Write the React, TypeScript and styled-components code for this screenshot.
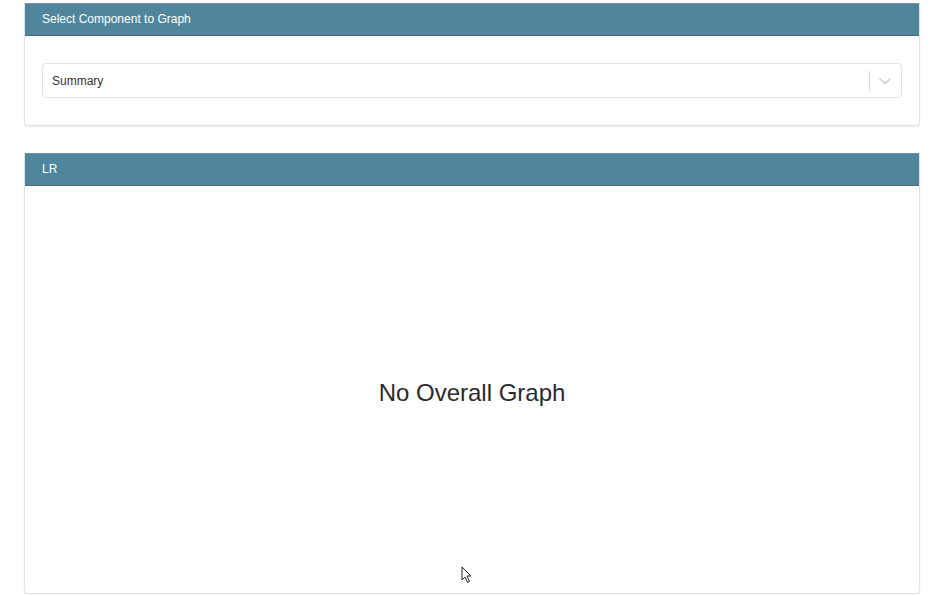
import React, { FC } from 'react';
import styled, { createGlobalStyle } from 'styled-components';

const GlobalStyle = createGlobalStyle`
    html, body {
        margin: 0;
        padding: 0;
        background: #ffffff;
        font-family: 'Liberation Sans', Arial, Helvetica, sans-serif;
        color: #333333;
    }
`;

const App: FC = () => {
    return (
        <Page>
            <GlobalStyle />
            <Card>
                <CardHeader>Select Component to Graph</CardHeader>
                <SelectBody>
                    <Select>
                        <SelectValue>Summary</SelectValue>
                        <Indicators>
                            <Separator />
                            <Chevron width="20" height="20" viewBox="0 0 20 20">
                                <path
                                    d="M5 8 L10 12.5 L15 8"
                                    fill="none"
                                    stroke="#cccccc"
                                    strokeWidth="1.6"
                                    strokeLinecap="round"
                                    strokeLinejoin="round"
                                />
                            </Chevron>
                        </Indicators>
                    </Select>
                </SelectBody>
            </Card>
            <Card>
                <CardHeader>LR</CardHeader>
                <GraphBody>
                    <EmptyText>No Overall Graph</EmptyText>
                    <Cursor width="12" height="18" viewBox="0 0 12 18">
                        <path
                            d="M1 1 L1 14 L4 11 L6.5 16.5 L8.5 15.5 L6 10 L10 10 Z"
                            fill="#ffffff"
                            stroke="#222222"
                            strokeWidth="1"
                            strokeLinejoin="round"
                        />
                    </Cursor>
                </GraphBody>
            </Card>
        </Page>
    );
};

const Page = styled.div`
    display: flex;
    flex-direction: column;
    gap: 27px;
    width: 896px;
    padding: 3px 0 0 24px;
`;

const Card = styled.section`
    display: flex;
    flex-direction: column;
    background: #ffffff;
    border: 1px solid #dfe3e8;
    border-top: none;
    border-radius: 0 0 4px 4px;
    box-shadow: 0 1px 2px rgba(0, 0, 0, 0.08);
    overflow: hidden;
`;

const CardHeader = styled.div`
    height: 31px;
    line-height: 31px;
    padding: 0 18px;
    margin: 0 -1px;
    background: #4f869d;
    border-top: 1px solid #8a8a8a;
    border-bottom: 1px solid #3f6f82;
    color: #ffffff;
    font-size: 12px;
`;

const SelectBody = styled.div`
    padding: 27px 17px 27px;
`;

const Select = styled.div`
    display: flex;
    align-items: center;
    height: 33px;
    border: 1px solid #e3e3e3;
    border-radius: 4px;
    padding-left: 9px;
`;

const SelectValue = styled.span`
    flex: 1;
    font-size: 12px;
    color: #333333;
`;

const Indicators = styled.div`
    display: flex;
    align-items: center;
    height: 100%;
`;

const Separator = styled.span`
    width: 1px;
    height: 20px;
    background: #d6d6d6;
`;

const Chevron = styled.svg`
    margin: 0 6px 0 5px;
`;

const GraphBody = styled.div`
    position: relative;
    display: flex;
    align-items: center;
    justify-content: center;
    height: 407px;
`;

const EmptyText = styled.div`
    font-size: 24px;
    color: #2b2b2b;
    margin-top: 6px;
`;

const Cursor = styled.svg`
    position: absolute;
    left: 436px;
    top: 380px;
`;

export default App;
